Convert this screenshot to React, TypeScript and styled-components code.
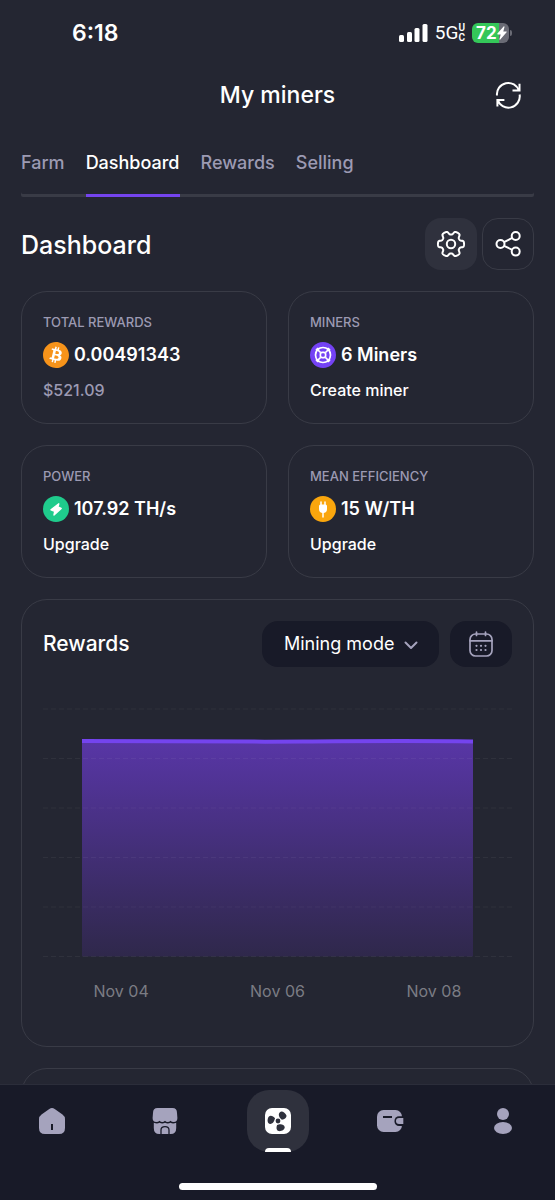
import React from "react";
import styled, { createGlobalStyle } from "styled-components";

const color = {
  page: "#242632",
  nav: "#181a28",
  line: "#393b46",
  raised: "#2f313d",
  muted: "#9c9ab2",
  icon: "#a5a3bd",
  text: "#ffffff",
  accent: "#7444ee",
};

const GlobalStyle = createGlobalStyle`
  *, *::before, *::after { box-sizing: border-box; }
  body {
    margin: 0;
    background: ${color.page};
    color: ${color.text};
    font-family: Inter, "Liberation Sans", sans-serif;
  }
  button, select { font: inherit; color: inherit; border: 0; cursor: pointer; }
  a { color: inherit; text-decoration: none; }
  h1, h2, h3, p { margin: 0; }
  svg { display: block; flex: none; }
`;

const Shell = styled.div`
  height: 100vh;
  display: flex;
  flex-direction: column;
`;

const Scroller = styled.div`
  flex: 1;
  min-height: 0;
  overflow: hidden;
`;

const StatusBar = styled.div`
  height: 66px;
  padding: 0 43px 0 72px;
  display: flex;
  align-items: center;
  justify-content: space-between;
`;

const Clock = styled.time`
  font-size: 23px;
  line-height: 28px;
  font-weight: 600;
`;

const StatusIcons = styled.div`
  display: flex;
  align-items: center;
  gap: 7px;
`;

const Network = styled.span`
  display: flex;
  align-items: center;
  font: 400 19px/20px Roboto, sans-serif;
`;

const NetworkSuffix = styled.span`
  display: grid;
  font-size: 10px;
  line-height: 10px;
  font-weight: 600;
`;

const Battery = styled.span`
  display: flex;
  align-items: center;
  gap: 1px;
`;

const BatteryBody = styled.span`
  width: 37px;
  height: 20px;
  padding-left: 4px;
  border-radius: 6px;
  display: flex;
  align-items: center;
  font-size: 17px;
  line-height: 20px;
  font-weight: 700;
  background: linear-gradient(90deg, #34c759 73%, #6a6b75 73%);
`;

const BatteryTip = styled.span`
  width: 2px;
  height: 6px;
  border-radius: 0 2px 2px 0;
  background: #6a6b75;
`;

const Header = styled.header`
  height: 58px;
  padding: 0 21px;
  display: grid;
  grid-template-columns: 52px 1fr 52px;
  align-items: center;
`;

const Title = styled.h1`
  grid-column: 2;
  text-align: center;
  font-size: 23px;
  line-height: 28px;
  font-weight: 500;
`;

const IconButton = styled.button<{ $look?: "filled" | "outlined" }>`
  width: 52px;
  height: 52px;
  padding: 0;
  display: grid;
  place-items: center;
  border-radius: 16px;
  background: ${(p) => (p.$look === "filled" ? color.raised : "transparent")};
  border: ${(p) => (p.$look === "outlined" ? `1px solid ${color.line}` : "0")};
`;

const Tabs = styled.nav`
  margin: 27px 21px 0;
  display: flex;
  gap: 21px;
  border-radius: 2px;
  box-shadow: inset 0 -3px ${color.line};
`;

const Tab = styled.a<{ $active?: boolean }>`
  padding-bottom: 19px;
  font-size: 18px;
  line-height: 24px;
  font-weight: 500;
  color: ${(p) => (p.$active ? color.text : color.muted)};
  border-bottom: 3px solid ${(p) => (p.$active ? color.accent : "transparent")};
`;

const Content = styled.main`
  padding: 21px;
  display: flex;
  flex-direction: column;
  gap: 21px;
`;

const SectionBar = styled.div`
  display: flex;
  align-items: center;
  justify-content: space-between;
`;

const SectionTitle = styled.h2`
  padding-top: 2px;
  font-size: 25px;
  line-height: 32px;
  font-weight: 500;
`;

const Actions = styled.div`
  display: flex;
  gap: 5px;
`;

const CardGrid = styled.div`
  display: grid;
  grid-template-columns: 1fr 1fr;
  gap: 21px;
`;

const Card = styled.section`
  border: 1px solid ${color.line};
  border-radius: 26px;
`;

const StatCard = styled(Card)`
  padding: 20px 21px 23px;
`;

const StatLabel = styled.h3`
  font-size: 13px;
  line-height: 20px;
  font-weight: 500;
  color: ${color.muted};
`;

const StatValue = styled.p`
  margin: 10px 0 12px;
  display: flex;
  align-items: center;
  gap: 5px;
  font-size: 18px;
  line-height: 26px;
  font-weight: 600;
`;

const StatNote = styled.p`
  font-size: 16px;
  line-height: 20px;
  font-weight: 500;
  color: ${color.muted};
`;

const StatLink = styled.a`
  display: block;
  font-size: 16px;
  line-height: 20px;
  font-weight: 500;
`;

const ChartCard = styled(Card)`
  padding: 21px 21px 45px;
`;

const ChartHead = styled.div`
  display: flex;
  align-items: center;
  gap: 11px;
`;

const ChartTitle = styled.h3`
  flex: 1;
  font-size: 21px;
  line-height: 26px;
  font-weight: 500;
`;

const ModePicker = styled.label`
  position: relative;
  display: block;
`;

const ModeSelect = styled.select`
  appearance: none;
  height: 46px;
  padding: 0 44px 0 22px;
  border-radius: 16px;
  background: ${color.nav};
  font-size: 18px;
  line-height: 24px;
`;

const ModeChevron = styled.svg`
  position: absolute;
  right: 20px;
  top: 16px;
  pointer-events: none;
`;

const CalendarButton = styled.button`
  width: 62px;
  height: 46px;
  padding: 0;
  display: grid;
  place-items: center;
  border-radius: 16px;
  background: ${color.nav};
`;

const Plot = styled.svg`
  width: 100%;
  height: 252px;
  margin-top: 40px;
`;

const Axis = styled.div`
  margin-top: 22px;
  padding: 0 39px;
  display: grid;
  grid-template-columns: repeat(5, 1fr);
  justify-items: center;
  font-size: 16px;
  line-height: 20px;
  color: #7b7c84;
  white-space: nowrap;
`;

const AxisLabel = styled.span<{ $column: number }>`
  grid-column: ${(p) => p.$column};
`;

const NextCard = styled(Card)`
  height: 200px;
`;

const BottomBar = styled.footer`
  border-top: 1px solid #2b2d3a;
  background: ${color.nav};
  padding: 5px 21px 10px;
`;

const BottomNav = styled.nav`
  display: flex;
  justify-content: space-between;
`;

const NavItem = styled.a<{ $active?: boolean }>`
  position: relative;
  width: 62px;
  height: 62px;
  border-radius: 22px;
  display: grid;
  place-items: center;
  color: ${(p) => (p.$active ? color.text : color.icon)};
  background: ${(p) => (p.$active ? color.raised : "transparent")};
`;

const ActiveMark = styled.span`
  position: absolute;
  left: 18px;
  right: 18px;
  bottom: 0;
  height: 4px;
  border-radius: 4px 4px 0 0;
  background: #fff;
`;

const HomeIndicator = styled.div`
  width: 198px;
  height: 7px;
  margin: 31px auto 0;
  border-radius: 4px;
  background: #fff;
`;

const gearPath =
  Array.from({ length: 180 }, (_, i) => {
    const a = (i / 180) * Math.PI * 2;
    const r = 11.2 + 1.8 * (Math.tanh(2.2 * Math.cos(6 * a) + 0.5) / Math.tanh(2.2));
    return `${i ? "L" : "M"}${(15 + r * Math.cos(a)).toFixed(2)} ${(15 + r * Math.sin(a)).toFixed(2)}`;
  }).join("") + "Z";

const SignalIcon = () => (
  <svg width="29" height="18" fill="#fff" aria-hidden="true">
    <rect x="0" y="11" width="5" height="7" rx="1.5" />
    <rect x="8" y="8" width="5" height="10" rx="1.5" />
    <rect x="15.5" y="4" width="5" height="14" rx="1.5" />
    <rect x="23.5" y="0" width="5" height="18" rx="1.5" />
  </svg>
);

const BoltIcon = () => (
  <svg width="10" height="14" viewBox="0 0 10 14" fill="#fff" aria-hidden="true">
    <path d="M6.6.4.4 7.6c-.3.4-.1.8.4.8h2.9L2.5 13c-.2.7.4.9.8.4L9.6 6.3c.3-.4.1-.8-.4-.8H6.3L7.5.9C7.6.2 7 0 6.6.4Z" />
  </svg>
);

const RefreshIcon = () => (
  <svg width="28" height="28" fill="none" stroke="#fff" strokeWidth="2" aria-hidden="true">
    <path d="M3 14.5A11.3 11.3 0 0 1 25 9.8M25.5 2.8V9.4H18.5M25.6 13.5A11.3 11.3 0 0 1 3.6 18.5M3.4 25.5V18.900H10.400" />
  </svg>
);

const GearIcon = () => (
  <svg width="30" height="30" fill="none" stroke="#fff" strokeWidth="2" strokeLinejoin="round" aria-hidden="true">
    <path d={gearPath} />
    <circle cx="15" cy="15" r="4.2" />
  </svg>
);

const ShareIcon = () => (
  <svg width="28" height="28" fill="none" stroke="#fff" strokeWidth="2" aria-hidden="true">
    <circle cx="6.5" cy="14" r="4" />
    <circle cx="21.7" cy="6" r="4" />
    <circle cx="21.7" cy="21.6" r="4" />
    <path d="M10 12.2 18.2 7.9M10 15.8l8.200 4" />
  </svg>
);

const BitcoinIcon = () => (
  <svg width="26" height="26" viewBox="0 0 24 24" aria-hidden="true">
    <circle cx="12" cy="12" r="11" fill="#fff" />
    <path
      fill="#f7931a"
      d="M23.638 14.904c-1.602 6.43-8.113 10.34-14.542 8.736C2.67 22.05-1.244 15.525.362 9.105 1.962 2.67 8.475-1.243 14.9.358c6.43 1.605 10.342 8.115 8.738 14.548v-.002zm-6.35-4.613c.24-1.59-.974-2.45-2.64-3.03l.54-2.153-1.315-.33-.525 2.107c-.345-.087-.705-.167-1.064-.25l.526-2.127-1.32-.33-.54 2.165c-.285-.067-.565-.132-.84-.2l-1.815-.45-.35 1.407s.975.225.955.236c.535.136.63.486.615.766l-1.477 5.92c-.075.166-.24.406-.614.314.015.02-.96-.24-.96-.24l-.66 1.51 1.71.426.93.242-.54 2.19 1.32.327.54-2.17c.36.1.705.19 1.05.273l-.51 2.154 1.32.33.545-2.19c2.24.427 3.93.257 4.64-1.774.57-1.637-.03-2.58-1.217-3.196.854-.193 1.5-.76 1.68-1.93h.01zm-3.01 4.22c-.404 1.64-3.157.75-4.05.53l.72-2.9c.896.23 3.757.67 3.33 2.37zm.41-4.24c-.37 1.49-2.662.735-3.405.55l.654-2.64c.744.18 3.137.524 2.75 2.084v.006z"
    />
  </svg>
);

const MinerIcon = () => (
  <svg width="26" height="26" fill="none" stroke="#fff" strokeWidth="1.7" aria-hidden="true">
    <circle cx="13" cy="13" r="13" fill="#7442f5" stroke="none" />
    <circle cx="13" cy="13" r="7.5" />
    <rect x="10.4" y="10.4" width="5.2" height="5.2" rx="1.8" />
    <path d="M10.5 10.5 7.5 7.5M15.5 10.5l3-3M10.5 15.5l-3 3M15.5 15.5l3 3" />
    <path
      strokeWidth="2.2"
      strokeLinecap="round"
      d="M6.7 7.9 7.9 6.7M18.1 6.7l1.2 1.2M6.7 18.1l1.2 1.2M18.1 19.3l1.2-1.2"
    />
  </svg>
);

const PowerIcon = () => (
  <svg width="26" height="26" aria-hidden="true">
    <circle cx="13" cy="13" r="13" fill="#1fcb8c" />
    <path
      fill="#fff"
      stroke="#fff"
      strokeWidth="1.4"
      strokeLinejoin="round"
      d="M15.8 7.8 8 13.8l3.7 1.5-.7 3.7 7.2-6.6-3.3-1.4Z"
    />
  </svg>
);

const PlugIcon = () => (
  <svg width="26" height="26" fill="none" stroke="#fff" strokeWidth="1.5" strokeLinecap="round" aria-hidden="true">
    <circle cx="13" cy="13" r="13" fill="#faa60d" stroke="none" />
    <path d="M11 6v4M15 6v4M13 16v5" />
    <path
      fill="#fff"
      stroke="none"
      d="M10.5 8.5h5a1.5 1.5 0 0 1 1.5 1.5v3a4 4 0 0 1-8 0v-3a1.5 1.5 0 0 1 1.5-1.5Z"
    />
  </svg>
);

const CalendarIcon = () => (
  <svg width="24" height="26" fill="none" stroke={color.icon} strokeWidth="1.7" strokeLinecap="round" aria-hidden="true">
    <rect x="1" y="3" width="22" height="22" rx="5.5" />
    <path d="M1 9.8h22M7.500 1v3.5M16.500 1v3.5" />
    <path strokeWidth="2.2" d="M7.5 14.8h.01M12 14.8h.01M16.5 14.8h.01M7.5 19h.01M12 19h.01M16.5 19h.01" />
  </svg>
);

const HomeIcon = () => (
  <svg width="26" height="26" aria-hidden="true">
    <path
      fill="currentColor"
      d="M10.3 1Q13-.9 15.7 1L23.5 6.4Q26 8.2 26 11V20Q26 26 20 26H6Q0 26 0 20V11Q0 8.2 2.5 6.4Z"
    />
    <rect x="12" y="16" width="2" height="6" fill={color.nav} />
  </svg>
);

const StoreIcon = () => (
  <svg width="26" height="26" aria-hidden="true">
    <path
      fill="currentColor"
      d="M5.5 0h15Q25 0 25 5l.4 5q0 4-3.7 4-2.1 0-3.2-1.3-1.1 1.3-2.8 1.3T13 12.700Q11.800 14 10.300 14T7.500 12.700Q6.400 14 4.300 14 .6 14 .6 10L1 5Q1 0 5.500 0Z"
    />
    <path
      fill="currentColor"
      d="M1.8 14.8q3.4 1.4 5.7 0 2.7 1.4 5.5 0 2.8 1.4 5.5 0 2.3 1.4 5.7 0V20q0 6-5.5 6H7.3q-5.5 0-5.5-6Z"
    />
    <path fill="currentColor" stroke={color.nav} strokeWidth="1.3" d="M9 26.6V22q0-3.4 4-3.4T17 22v4.600Z" />
  </svg>
);

const bladePath = "M.6-3.6C-2-3.8-4.6-5.5-4.2-8-3.8-10.6.5-11 2.8-9.7 4.8-8.4 4-5.4 2.2-3.4Z";

const FanIcon = () => (
  <svg width="26" height="26" viewBox="-13 -13 26 26" aria-hidden="true">
    <rect x="-13" y="-13" width="26" height="26" rx="7" fill="currentColor" />
    <g fill={color.raised}>
      <circle r="2.4" />
      {[-80, 40, 160].map((angle) => (
        <path key={angle} d={bladePath} transform={`rotate(${angle})`} />
      ))}
    </g>
  </svg>
);

const WalletIcon = () => (
  <svg width="28" height="26" aria-hidden="true">
    <rect x="1" y="2" width="25" height="22" rx="6.5" fill="currentColor" />
    <rect x="18.5" y="8.2" width="12" height="9.8" rx="4.5" fill={color.nav} />
    <path fill="currentColor" d="M23 10h4.300v6H23a3 3 0 0 1 0-6Z" />
    <rect x="7" y="8" width="9" height="2" fill={color.nav} />
  </svg>
);

const ProfileIcon = () => (
  <svg width="26" height="26" fill="currentColor" aria-hidden="true">
    <circle cx="13" cy="6" r="6" />
    <ellipse cx="13" cy="20" rx="9" ry="6" />
  </svg>
);

const stats = [
  { label: "TOTAL REWARDS", icon: <BitcoinIcon />, value: "0.00491343", note: "$521.09" },
  { label: "MINERS", icon: <MinerIcon />, value: "6 Miners", link: "Create miner" },
  { label: "POWER", icon: <PowerIcon />, value: "107.92 TH/s", link: "Upgrade" },
  { label: "MEAN EFFICIENCY", icon: <PlugIcon />, value: "15 W/TH", link: "Upgrade" },
];

const tabs = ["Farm", "Dashboard", "Rewards", "Selling"];

const navItems = [
  { name: "Home", icon: <HomeIcon /> },
  { name: "Store", icon: <StoreIcon /> },
  { name: "Miners", icon: <FanIcon />, active: true },
  { name: "Wallet", icon: <WalletIcon /> },
  { name: "Profile", icon: <ProfileIcon /> },
];

const gridLines = [2, 51.5, 101, 150.5, 200, 249.5];

const RewardsPlot = () => (
  <Plot viewBox="0 0 469 252" preserveAspectRatio="none" role="img" aria-label="Rewards, Nov 04 to Nov 08">
    <defs>
      <linearGradient id="area" x1="0" y1="0" x2="0" y2="1">
        <stop offset="0" stopColor="#5836a6" />
        <stop offset="1" stopColor="#2f284b" />
      </linearGradient>
    </defs>
    <path fill="url(#area)" d="M39 34C170 34 200 35 260 34.5S370 33.5 430 34.5V249.5H39Z" />
    {gridLines.map((y) => (
      <path key={y} d={`M0 ${y}H469`} stroke="#fff" strokeOpacity=".05" strokeDasharray="5 3" />
    ))}
    <path fill="none" stroke="#7444ee" strokeWidth="4" d="M39 34C170 34 200 35 260 34.5S370 33.5 430 34.5" />
  </Plot>
);

export default function App() {
  return (
    <Shell>
      <GlobalStyle />
      <Scroller>
        <StatusBar>
          <Clock>6:18</Clock>
          <StatusIcons>
            <SignalIcon />
            <Network>
              5G
              <NetworkSuffix>
                <span>U</span>
                <span>C</span>
              </NetworkSuffix>
            </Network>
            <Battery>
              <BatteryBody>
                72
                <BoltIcon />
              </BatteryBody>
              <BatteryTip />
            </Battery>
          </StatusIcons>
        </StatusBar>
        <Header>
          <Title>My miners</Title>
          <IconButton aria-label="Refresh">
            <RefreshIcon />
          </IconButton>
        </Header>
        <Tabs>
          {tabs.map((tab) => (
            <Tab key={tab} href="#" $active={tab === "Dashboard"}>
              {tab}
            </Tab>
          ))}
        </Tabs>
        <Content>
          <SectionBar>
            <SectionTitle>Dashboard</SectionTitle>
            <Actions>
              <IconButton $look="filled" aria-label="Settings">
                <GearIcon />
              </IconButton>
              <IconButton $look="outlined" aria-label="Share">
                <ShareIcon />
              </IconButton>
            </Actions>
          </SectionBar>
          <CardGrid>
            {stats.map((stat) => (
              <StatCard key={stat.label}>
                <StatLabel>{stat.label}</StatLabel>
                <StatValue>
                  {stat.icon}
                  {stat.value}
                </StatValue>
                {stat.link ? <StatLink href="#">{stat.link}</StatLink> : <StatNote>{stat.note}</StatNote>}
              </StatCard>
            ))}
          </CardGrid>
          <ChartCard>
            <ChartHead>
              <ChartTitle>Rewards</ChartTitle>
              <ModePicker>
                <ModeSelect aria-label="Chart mode" defaultValue="mining">
                  <option value="mining">Mining mode</option>
                </ModeSelect>
                <ModeChevron width="16" height="16" fill="none" stroke={color.icon} strokeWidth="2" strokeLinecap="round" strokeLinejoin="round">
                  <path d="M2.5 5.5 8 11l5.5-5.5" />
                </ModeChevron>
              </ModePicker>
              <CalendarButton aria-label="Choose dates">
                <CalendarIcon />
              </CalendarButton>
            </ChartHead>
            <RewardsPlot />
            <Axis>
              <AxisLabel $column={1}>Nov 04</AxisLabel>
              <AxisLabel $column={3}>Nov 06</AxisLabel>
              <AxisLabel $column={5}>Nov 08</AxisLabel>
            </Axis>
          </ChartCard>
          <NextCard />
        </Content>
      </Scroller>
      <BottomBar>
        <BottomNav>
          {navItems.map((item) => (
            <NavItem key={item.name} href="#" aria-label={item.name} $active={item.active}>
              {item.icon}
              {item.active && <ActiveMark />}
            </NavItem>
          ))}
        </BottomNav>
        <HomeIndicator />
      </BottomBar>
    </Shell>
  );
}
